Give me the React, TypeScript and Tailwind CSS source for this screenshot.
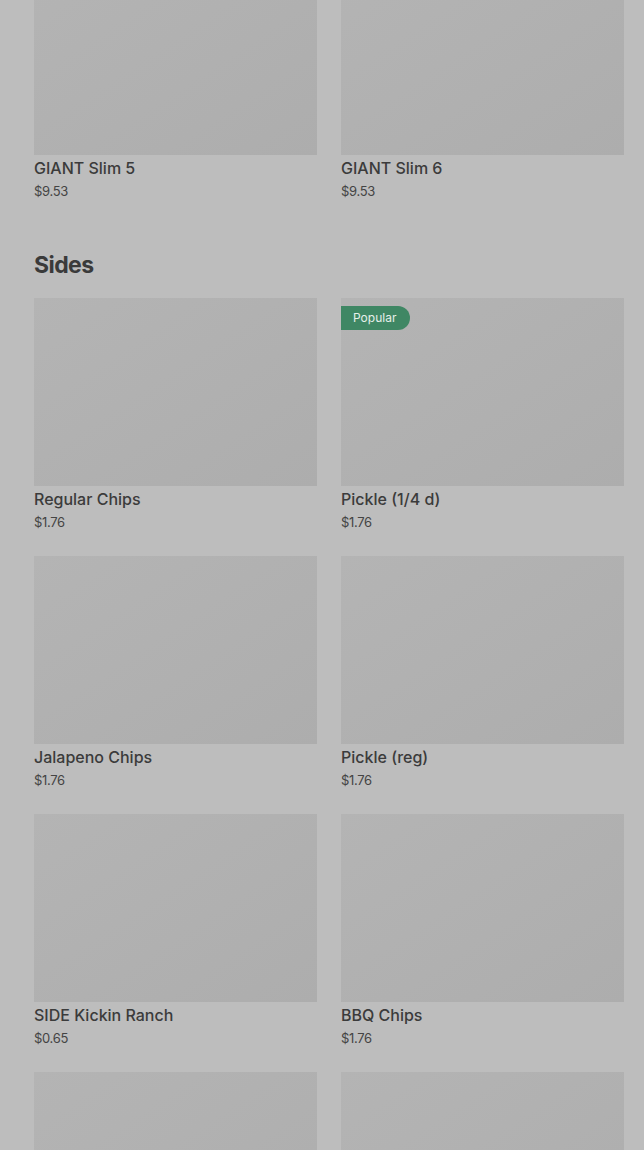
type Item = { name: string; price: string; popular?: boolean };

const topRow: Item[] = [
  { name: "GIANT Slim 5", price: "$9.53" },
  { name: "GIANT Slim 6", price: "$9.53" },
];

const sides: Item[] = [
  { name: "Regular Chips", price: "$1.76" },
  { name: "Pickle (1/4 d)", price: "$1.76", popular: true },
  { name: "Jalapeno Chips", price: "$1.76" },
  { name: "Pickle (reg)", price: "$1.76" },
  { name: "SIDE Kickin Ranch", price: "$0.65" },
  { name: "BBQ Chips", price: "$1.76" },
  { name: "", price: "" },
  { name: "", price: "" },
];

function Card({ item }: { item: Item }) {
  return (
    <div className="flex flex-col">
      <div className="relative h-[188px] bg-gradient-to-br from-[#b4b4b4] to-[#adadad]">
        {item.popular ? (
          <span className="absolute left-0 top-2 flex h-6 items-center rounded-r-full bg-[#3f8764] pl-3 pr-[14px] text-[12px] text-[#e6efe9]">
            Popular
          </span>
        ) : null}
      </div>
      {item.name ? (
        <>
          <p className="text-[16px] font-medium leading-[26px] text-[#3b3b3b]">{item.name}</p>
          <p className="text-[13px] leading-5 tracking-tight text-[#444444]">{item.price}</p>
        </>
      ) : null}
    </div>
  );
}

export default function App() {
  return (
    <div
      className="h-[1150px] overflow-hidden bg-[#bdbdbd] pl-[34px] pr-[20px]"
      style={{ fontFamily: "Inter, 'Liberation Sans', sans-serif" }}
    >
      <div className="-mt-[33px] grid grid-cols-2 gap-x-6">
        {topRow.map((item) => (
          <Card key={item.name} item={item} />
        ))}
      </div>
      <h2 className="mt-[50px] text-[23px] font-bold leading-7 tracking-tight text-[#3a3a3a]">
        Sides
      </h2>
      <div className="mt-[19px] grid grid-cols-2 gap-x-6 gap-y-6">
        {sides.map((item, i) => (
          <Card key={i} item={item} />
        ))}
      </div>
    </div>
  );
}
